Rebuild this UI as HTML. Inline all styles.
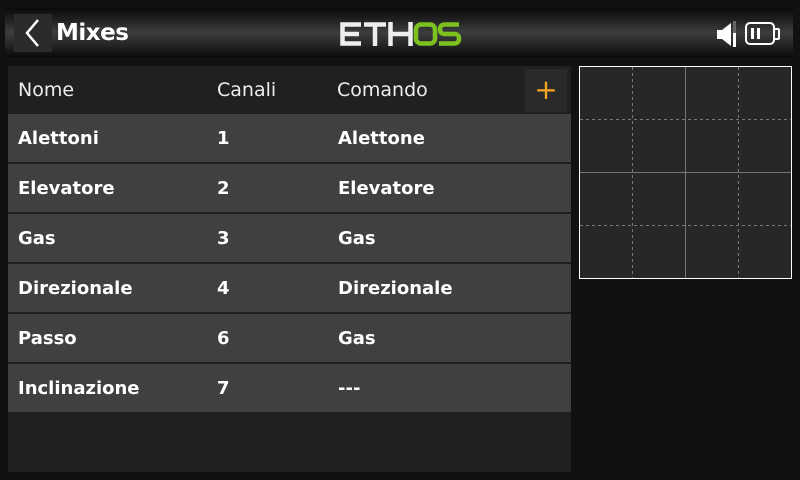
<!DOCTYPE html>
<html><head><style>
body{margin:0;width:800px;height:480px;background:#111;overflow:hidden;font-family:"DejaVu Sans","Liberation Sans",sans-serif;color:#fff;position:relative}
.hdr{position:absolute;left:5px;top:8px;width:788px;height:49px;background:linear-gradient(#0a0a0a 0%,#222 25%,#3c3e3e 50%,#222 78%,#0a0a0a 100%)}
.back{position:absolute;left:14px;top:14px;width:38px;height:38px;background:#2b2b2b}
.title{position:absolute;left:56px;top:20px;font-size:23px;font-weight:bold;letter-spacing:-0.5px}
.panel{position:absolute;left:8px;top:66px;width:563px;height:406px;background:#202020}
.th{position:absolute;top:79px;font-size:19px;color:#eee}
.plus{position:absolute;left:525px;top:69px;width:42px;height:43px;background:#2a2a2a;color:#f5a623;font-size:28px;text-align:center;line-height:42px}
.row{position:absolute;left:8px;width:563px;height:48px;background:#404040;font-weight:bold;font-size:18px}
.row span{position:absolute;top:14px}
</style></head><body>
<div class="hdr"></div>
<div class="back"></div>
<svg style="position:absolute;left:14px;top:14px" width="38" height="38"><polyline points="24,6 13,19 24,32" fill="none" stroke="#fff" stroke-width="2.5"/></svg>
<div class="title">Mixes</div>
<svg style="position:absolute;left:338px;top:22px" width="124" height="26">
<g fill="none" stroke="#eee" stroke-width="4.5">
<path d="M23 2.5H4.5V21.5H23M4.5 12H21"/>
<path d="M26 2.5H48M37 2.5V24"/>
<path d="M52.5 0V24M72.5 0V24M52.5 12H72.5"/>
</g>
<g fill="none" stroke="#7dc11f" stroke-width="4.5">
<rect x="78" y="2.5" width="19" height="19" rx="5"/>
<path d="M121 2.5H107Q102 2.5 102 7.5Q102 12 107 12H116Q121 12 121 16.5Q121 21.5 116 21.5H101"/>
</g>
</svg>
<svg style="position:absolute;left:715px;top:20px" width="70" height="28">
<path d="M2 10H7L16 3V26L7 19H2Z" fill="#fff"/>
<rect x="18" y="1" width="3" height="26" fill="#666"/><rect x="18" y="13" width="3" height="14" fill="#fff"/>
<rect x="31" y="3" width="28" height="21" rx="4" fill="none" stroke="#fff" stroke-width="2"/>
<rect x="59" y="9" width="5" height="10" rx="1" fill="none" stroke="#fff" stroke-width="2"/>
<rect x="36" y="8" width="3" height="11" fill="#fff"/><rect x="42" y="8" width="3" height="11" fill="#fff"/>
</svg>
<div class="panel"></div>
<div class="th" style="left:18px">Nome</div>
<div class="th" style="left:217px">Canali</div>
<div class="th" style="left:337px">Comando</div>
<div class="plus">+</div>
<div class="row" style="top:114px"><span style="left:10px">Alettoni</span><span style="left:209px">1</span><span style="left:330px">Alettone</span></div>
<div class="row" style="top:164px"><span style="left:10px">Elevatore</span><span style="left:209px">2</span><span style="left:330px">Elevatore</span></div>
<div class="row" style="top:214px"><span style="left:10px">Gas</span><span style="left:209px">3</span><span style="left:330px">Gas</span></div>
<div class="row" style="top:264px"><span style="left:10px">Direzionale</span><span style="left:209px">4</span><span style="left:330px">Direzionale</span></div>
<div class="row" style="top:314px"><span style="left:10px">Passo</span><span style="left:209px">6</span><span style="left:330px">Gas</span></div>
<div class="row" style="top:364px"><span style="left:10px">Inclinazione</span><span style="left:209px">7</span><span style="left:330px">---</span></div>
<svg style="position:absolute;left:579px;top:66px" width="214" height="214">
<rect x="0.5" y="0.5" width="212" height="212" fill="#272727" stroke="#fff" stroke-width="1"/>
<g stroke="#777" stroke-width="1" stroke-dasharray="3,3">
<path d="M53.5 1V212M159.5 1V212M1 53.5H212M1 159.5H212"/>
</g>
<path d="M106.5 1V212M1 106.5H212" stroke="#777" stroke-width="1"/>
</svg>
</body></html>
